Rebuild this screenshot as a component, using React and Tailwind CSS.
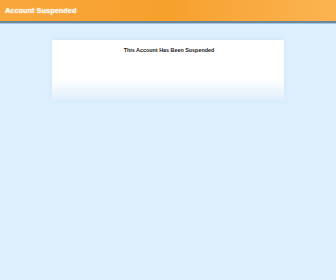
export default function App() {
  return (
    <div className="w-[336px] h-[280px] bg-[#ddeffd] overflow-hidden" style={{ fontFamily: '"Liberation Sans", Arial, sans-serif' }}>
      <div className="h-[21px] bg-gradient-to-r from-[#f9a73c] via-[#f7a02c] to-[#fbb450] flex items-center pl-[5px]">
        <span className="text-[7.4px] font-bold text-white [text-shadow:0_0_2px_rgba(255,255,255,0.6)]">Account Suspended</span>
      </div>
      <div className="h-[2px] bg-[#6f8696]" />
      <div className="h-[1px] bg-[#9fc6e4]" />
      <div className="pt-[16px] flex justify-center">
        <div className="w-[232px] h-[60px] bg-gradient-to-b from-white from-[65%] to-[#dfeffd] shadow-[0_-1px_4px_rgba(205,228,246,0.9)] flex justify-center pt-[6px] pl-[2px]">
          <span className="text-[5.4px] font-bold text-[#222]">This Account Has Been Suspended</span>
        </div>
      </div>
    </div>
  )
}
